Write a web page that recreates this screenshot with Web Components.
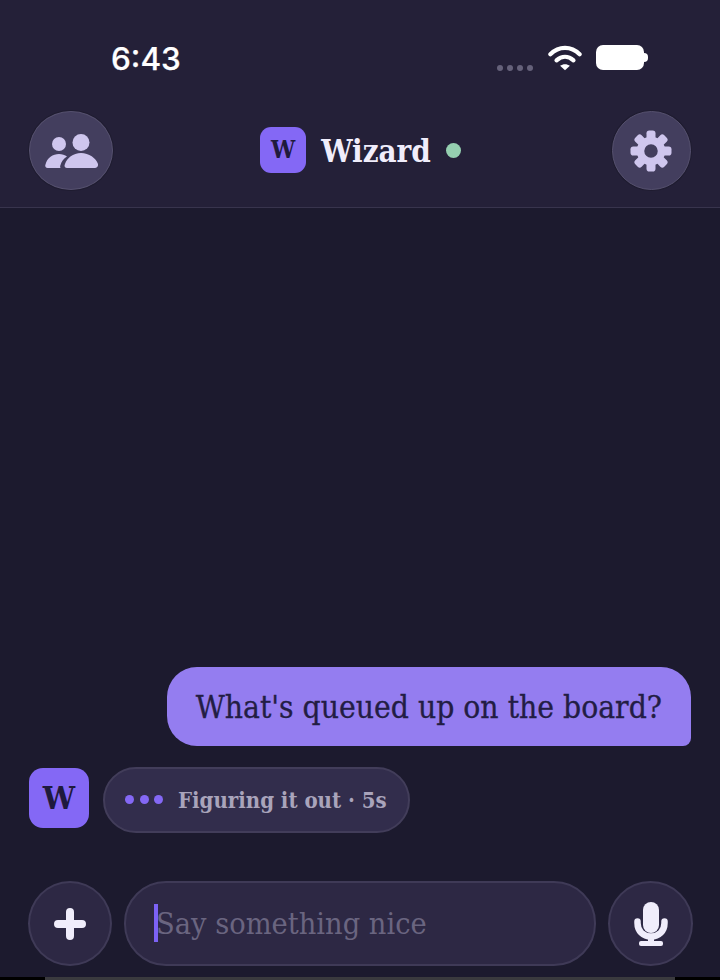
<!DOCTYPE html>
<html><head><meta charset="utf-8">
<style>
html,body{margin:0;padding:0;background:#1c1a2e;}
body{width:720px;height:980px;overflow:hidden;font-family:"DejaVu Serif Condensed","DejaVu Serif",serif;font-stretch:condensed;}
</style></head><body>
<chat-app></chat-app>
<template id="t-app">
<style>
:host{display:flex;flex-direction:column;width:720px;height:980px;background:#1c1a2e;}
.spacer{flex:1;}
.msgs{display:flex;flex-direction:column;padding:0 29px;gap:21px;}
</style>
<status-bar></status-bar>
<top-bar></top-bar>
<div class="spacer"></div>
<div class="msgs">
<user-bubble>What's queued up on the board?</user-bubble>
<thinking-row>Figuring it out · 5s</thinking-row>
</div>
<composer-bar placeholder="Say something nice"></composer-bar>
<home-edge></home-edge>
</template>
<script>
const SERIF='"DejaVu Serif Condensed","DejaVu Serif",serif';
function def(name,html,setup){
  customElements.define(name,class extends HTMLElement{
    constructor(){super();const r=this.attachShadow({mode:'open'});r.innerHTML=html;}
    connectedCallback(){if(setup)setup(this);}
  });
}
const tooth=[0,45,90,135,180,225,270,315].map(a=>`<rect x="16.5" y="0.5" width="9" height="10" rx="2.8" transform="rotate(${a} 21 21)"/>`).join('');
def('status-bar',`<style>
:host{display:flex;justify-content:space-between;height:101px;box-sizing:border-box;padding:41px 72px 0 111px;background:#242038;color:#fff;}
.time{font:500 31.500px/36px Inter,"Liberation Sans",sans-serif;height:36px;-webkit-text-stroke:.25px #fff;}
.right{display:flex;align-items:flex-start;height:32px;}
.dots{display:flex;gap:4px;margin:24px 15px 0 0;}
.dots i{width:6px;height:6px;border-radius:50%;background:#65617a;}
svg{display:block;}
.wifi{margin-top:4px;}
.bat{display:flex;align-items:center;margin:4px 0 0 14px;}
.bat b{display:block;width:48px;height:25px;border-radius:7px;background:#fff;}
.bat u{display:block;width:4px;height:9px;background:#fff;border-radius:0 5px 5px 0;}
</style>
<span class="time">6:43</span>
<div class="right">
<div class="dots"><i></i><i></i><i></i><i></i></div>
<svg class="wifi" width="34" height="26" viewBox="0 0 36 27" fill="none" stroke="#fff" stroke-linecap="round" stroke-width="4.400"><path d="M2.500 9.500C11.500 .5 24.500 .5 33.500 9.500"/><path d="M9 16C14.500 11 21.500 11 27 16"/><path d="M18 26.500L12.800 21.800C15.800 19.400 20.200 19.400 23.200 21.800Z" fill="#fff" stroke="none"/></svg>
<div class="bat"><b></b><u></u></div>
</div>`);
def('round-btn',`<style>
:host{display:flex;align-items:center;justify-content:center;width:79px;height:79px;box-sizing:border-box;border-radius:50%;background:#433e5e;border:1px solid #56516f;box-shadow:0 0 0 1px #1f1c30;}
:host([wide]){width:84px;}
</style><slot></slot>`);
def('top-bar',`<style>
:host{display:flex;align-items:center;justify-content:space-between;box-sizing:border-box;height:107px;padding:0 29px 8px 29px;background:#242038;border-bottom:1px solid #38344d;}
.title{display:flex;align-items:center;margin-right:4px;}
.logo{width:46px;height:46px;border-radius:11px;background:#8468f5;color:#1f1a3d;display:flex;align-items:center;justify-content:center;font:700 24px/1 ${SERIF};font-stretch:condensed;}
.name{font:700 31px/1 ${SERIF};font-stretch:condensed;color:#f0edfb;margin-left:15px;padding-top:2px;}
.dot{width:15px;height:15px;border-radius:50%;background:#95cfb0;margin-left:15px;}
svg{display:block;margin-top:2px;}
</style>
<round-btn wide><svg width="53" height="34" viewBox="0 0 53 34" fill="#cfc6ee"><circle cx="14" cy="10" r="7"/><circle cx="36" cy="8.500" r="8.500"/><path d="M2.500 34C.5 34 -.2 32 .5 30.500C2 24 8 20 14 20C17 20 20 21 22 22.500C18.500 24.500 16.500 27.500 15.500 31C15 32 15 33 15.500 34Z"/><path d="M22 34C19.500 34 19 32 20 30C22 24 28 19 36 19C44 19 51 24 53 30C53.500 32 52 34 50 34Z"/></svg></round-btn>
<div class="title"><span class="logo">W</span><span class="name">Wizard</span><span class="dot"></span></div>
<round-btn><svg width="42" height="42" viewBox="0 0 42 42" fill="#cfc6ee"><circle cx="21" cy="21" r="10.500" fill="none" stroke="#cfc6ee" stroke-width="7.500"/>${tooth}</svg></round-btn>`);
def('user-bubble',`<style>
:host{display:block;align-self:flex-end;box-sizing:border-box;height:79px;padding:1px 29px 0;border-radius:30px 30px 8px 30px;background:#947df0;color:#231d44;font:400 31.500px/78px ${SERIF};font-stretch:condensed;white-space:nowrap;-webkit-text-stroke:.3px currentColor;}
</style><slot></slot>`);
def('thinking-row',`<style>
:host{display:flex;align-items:flex-start;gap:14px;}
.logo{width:60px;height:60px;margin-top:1px;border-radius:14px;background:#8468f5;color:#1f1a3d;display:flex;align-items:center;justify-content:center;font:700 32px/1 ${SERIF};font-stretch:condensed;}
.pill{display:flex;align-items:center;height:66px;box-sizing:border-box;padding:0 21px 1px 20px;border-radius:33px;background:#322d4c;border:2px solid #423d5a;color:#a9a4bb;font:700 22px/1 ${SERIF};font-stretch:condensed;white-space:nowrap;}
.dots{display:flex;gap:5.500px;margin-right:15px;}
.dots i{width:9px;height:9px;border-radius:50%;background:#8468f5;}
</style>
<span class="logo">W</span>
<div class="pill"><span class="dots"><i></i><i></i><i></i></span><slot></slot></div>`);
def('composer-bar',`<style>
:host{display:flex;align-items:center;gap:12px;box-sizing:border-box;height:85px;margin:48px 0 11px;padding:0 27px 0 28px;}
.c{width:85px;height:85px;box-sizing:border-box;border-radius:50%;background:#2d2844;border:2px solid #3f3a57;display:flex;align-items:center;justify-content:center;flex:none;}
.c.l{width:84px;}
.input{flex:1;height:85px;box-sizing:border-box;border-radius:42px;background:#2d2844;border:2px solid #3f3a57;display:flex;align-items:center;padding-left:28px;color:#6a6580;font:400 30.400px/1 ${SERIF};font-stretch:condensed;}
.ph{padding-top:1px;}
.caret{width:4px;height:38px;background:#7c62f5;margin:-2px -2px 0 0;flex:none;position:relative;z-index:1;}
svg{display:block;}
</style>
<div class="c l"><svg width="32" height="32" viewBox="0 0 32 32" stroke="#f0edfb" stroke-width="8" stroke-linecap="round"><path d="M16 4V28M4 16H28"/></svg></div>
<div class="input"><span class="caret"></span><span class="ph"></span></div>
<div class="c"><svg width="34" height="44" viewBox="0 0 34 44" fill="#f0edfb"><rect x="9" y="0" width="16" height="31" rx="8"/><path d="M3.500 19.500V21C3.500 29 9 34.500 17 34.500C25 34.500 30.500 29 30.500 21V19.500" fill="none" stroke="#f0edfb" stroke-width="6.500" stroke-linecap="round"/><rect x="14" y="36" width="6" height="4"/><rect x="5" y="39" width="24" height="5" rx="2"/></svg></div>`,
el=>{el.shadowRoot.querySelector('.ph').textContent=el.getAttribute('placeholder');});
def('home-edge',`<style>
:host{display:flex;height:3px;background:#000;padding:0 45px;box-sizing:border-box;}
i{display:block;flex:1;background:#3a3a3e;}
</style><i></i>`);
def('chat-app',document.getElementById('t-app').innerHTML);
</script>
</body></html>
